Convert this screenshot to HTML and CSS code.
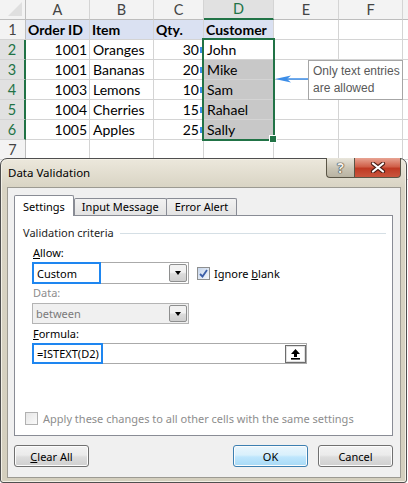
FILE: index.html
```html
<!DOCTYPE html>
<html>
<head>
<meta charset="utf-8">
<link rel="stylesheet" href="styles.css">
</head>
<body>
<div class="sheet">
  <div class="grid">
    <div class="corner"><span class="tri"></span></div>
    <div class="ch">A</div><div class="ch">B</div><div class="ch">C</div><div class="ch ch-sel">D</div><div class="ch">E</div><div class="ch">F</div><div class="ch"></div>

    <div class="rh">1</div>
    <div class="c hd">Order ID</div><div class="c hd">Item</div><div class="c hd">Qty.</div><div class="c hd">Customer</div><div class="c"></div><div class="c"></div><div class="c"></div>

    <div class="rh rh-sel">2</div>
    <div class="c num">1001</div><div class="c">Oranges</div><div class="c num numc">30</div><div class="c">John</div><div class="c"></div><div class="c"></div><div class="c"></div>

    <div class="rh rh-sel">3</div>
    <div class="c num">1001</div><div class="c">Bananas</div><div class="c num numc">20</div><div class="c gray">Mike</div><div class="c"></div><div class="c"></div><div class="c"></div>

    <div class="rh rh-sel">4</div>
    <div class="c num">1003</div><div class="c">Lemons</div><div class="c num numc">10</div><div class="c gray">Sam</div><div class="c"></div><div class="c"></div><div class="c"></div>

    <div class="rh rh-sel">5</div>
    <div class="c num">1004</div><div class="c">Cherries</div><div class="c num numc">15</div><div class="c gray">Rahael</div><div class="c"></div><div class="c"></div><div class="c"></div>

    <div class="rh rh-sel">6</div>
    <div class="c num">1005</div><div class="c">Apples</div><div class="c num numc">25</div><div class="c gray">Sally</div><div class="c"></div><div class="c"></div><div class="c"></div>

    <div class="rh">7</div>
    <div class="c"></div><div class="c"></div><div class="c"></div><div class="c"></div><div class="c"></div><div class="c"></div><div class="c"></div>

    <div class="rh"></div>
    <div class="c"></div><div class="c"></div><div class="c"></div><div class="c"></div><div class="c"></div><div class="c"></div><div class="c"></div>
  </div>

  <div class="marks"></div>
  <div class="selection"><span class="handle"></span></div>

  <svg class="arrow" width="34" height="10" viewBox="0 0 34 10">
    <line x1="8" y1="5" x2="34" y2="5" stroke="#3d8ee8" stroke-width="1.5"/>
    <path d="M0 5 L16 1.5 L12 5 L16 8.5 Z" fill="#3d8ee8"/>
  </svg>
  <div class="note">Only text entries<br>are allowed</div>

  <div class="dialog">
    <div class="titlebar">
      <span class="title">Data Validation</span>
      <div class="caption">
        <span class="cbtn help">?</span>
        <span class="cbtn close">
          <svg width="16" height="11" viewBox="0 0 16 11">
            <path d="M3 1.5 L13 9.5 M13 1.5 L3 9.5" stroke="#4a1c14" stroke-width="4.2" stroke-linecap="round"/>
            <path d="M3 1.5 L13 9.5 M13 1.5 L3 9.5" stroke="#ffffff" stroke-width="2.2" stroke-linecap="round"/>
          </svg>
        </span>
      </div>
    </div>
    <div class="client">
      <div class="tabs">
        <div class="tab active">Settings</div>
        <div class="tab second">Input Message</div>
        <div class="tab">Error Alert</div>
      </div>
      <div class="panel">
        <div class="group">
          <span>Validation criteria</span><span class="gline"></span>
        </div>
        <div class="fields">
          <div class="lbl lbl-allow"><u>A</u>llow:</div>
          <div class="row">
            <div class="combo">
              <span class="val hl">Custom</span>
              <span class="dd"><span class="tri-d"></span></span>
            </div>
            <label class="chk">
              <span class="box checked">
                <svg width="9" height="9" viewBox="0 0 9 9"><path d="M1 5 L3.5 7.5 L8 1" fill="none" stroke="#3b5ea8" stroke-width="1.8"/></svg>
              </span>
              <span>Ignore <u>b</u>lank</span>
            </label>
          </div>
          <div class="lbl lbl-data">Data:</div>
          <div class="combo disabled">
            <span class="val">between</span>
            <span class="dd"><span class="tri-d"></span></span>
          </div>
          <div class="lbl lbl-formula"><u>F</u>ormula:</div>
          <div class="formula">
            <span class="val hl">=ISTEXT(D2)</span>
            <span class="ref">
              <svg width="11" height="12" viewBox="0 0 11 12"><path d="M5.5 1 L1 6 L4 6 L4 9 L7 9 L7 6 L10 6 Z" fill="#000"/><rect x="1" y="10" width="9" height="1.6" fill="#000"/></svg>
            </span>
          </div>
        </div>
        <label class="apply">
          <span class="box"></span>
          <span>Apply these changes to all other cells with the same settings</span>
        </label>
      </div>
      <div class="buttons">
        <span class="btn"><u>C</u>lear All</span>
        <span class="spacer"></span>
        <span class="btn default">OK</span>
        <span class="btn">Cancel</span>
      </div>
    </div>
  </div>
</div>
</body>
</html>
```

FILE: styles.css
```css
* { box-sizing: border-box; }
html, body { margin: 0; padding: 0; background: #fff; }
body { width: 408px; height: 483px; overflow: hidden; }

.sheet { position: relative; width: 408px; height: 483px; font-family: Lato, "Liberation Sans", sans-serif; }

.grid {
  display: grid;
  grid-template-columns: 26px 64px 64px 50px 70px 65px 64px 20px;
  grid-template-rows: 20px repeat(8, 20px);
  width: 423px;
}
.grid > div { border-right: 1px solid #d4d4d4; border-bottom: 1px solid #d4d4d4; overflow: hidden; white-space: nowrap; }

.corner { background: #f3f3f3; position: relative; border-color: #bdbdbd !important; }
.tri { position: absolute; right: 3px; bottom: 3px; width: 0; height: 0; border-left: 14px solid transparent; border-bottom: 14px solid #dfdfdf; }

.ch { background: #f3f3f3; color: #444; font-size: 14.5px; line-height: 19px; text-align: center; border-bottom-color: #bdbdbd !important; }
.ch-sel { background: #e1e1e1; color: #217346; border-bottom: 2px solid #217346 !important; line-height: 18px; }

.rh { background: #f3f3f3; color: #444; font-size: 14.5px; line-height: 19px; text-align: center; border-right-color: #bdbdbd !important; }
.rh-sel { background: #e1e1e1; color: #217346; border-right: 2px solid #217346 !important; }

.c { font-size: 14px; line-height: 19px; color: #000; padding: 0 3px; }
.c.num { text-align: right; padding-right: 2px; }
.c.numc { padding-right: 4px; }
.c.hd { background: #dae1f2; font-weight: bold; padding-left: 2px; }
.c.gray { background: #c8c8c8; }

.marks {
  position: absolute; left: 200px; top: 40px; width: 2px; height: 100px;
  background: repeating-linear-gradient(transparent 0, transparent 7px, #3d8ee8 7px, #3d8ee8 13px, transparent 13px, transparent 20px);
}
.selection { position: absolute; left: 202px; top: 38px; width: 73px; height: 103px; border: 2px solid #217346; }
.handle { position: absolute; right: -4px; bottom: -4px; width: 6px; height: 6px; background: #217346; border: 1px solid #fff; box-sizing: content-box; }

.arrow { position: absolute; left: 275px; top: 74px; }
.note {
  position: absolute; left: 308px; top: 60px; width: 95px; height: 40px;
  border: 1px solid #a6a6a6; background: #fff;
  font-family: "Liberation Sans", Arial, sans-serif; font-size: 12px; line-height: 17px; color: #595959;
  padding: 2px 0 0 4px;
}

/* dialog */
.dialog {
  position: absolute; left: 0; top: 158px; width: 407px; height: 325px;
  border: 1px solid #4f4f4f; border-radius: 7px 7px 3px 3px;
  background: linear-gradient(#ece8dc 0px, #d9d4c4 28px, #d4cfbe 100%);
  box-shadow: inset 0 0 0 1px #f3f0e6;
  display: flex; flex-direction: column;
  font-family: "Noto Sans", "Open Sans", sans-serif; font-size: 11px; color: #000;
}
.titlebar { height: 28px; position: relative; display: flex; align-items: center; }
.title { padding-left: 7px; font-size: 11.5px; margin-top: -1px; }
.caption { position: absolute; top: -1px; right: 5px; display: flex; }
.cbtn {
  height: 20px; display: flex; align-items: center; justify-content: center;
  border: 1px solid #5a5546; border-top: none;
}
.help {
  width: 28px; border-radius: 0 0 0 4px; border-right: none;
  background: linear-gradient(#e9e6dc, #c9c4b4 55%, #b9b3a2);
  color: #f2f0ea; font-weight: bold; font-size: 14px; line-height: 18px;
  text-shadow: 0 0 1px #333, 0 0 1px #333, 0 0 1px #333;
}
.close {
  width: 47px; border-radius: 0 0 4px 0;
  background: linear-gradient(#e8a493, #d0604a 45%, #bf3a24 55%, #c9553d);
}

.client {
  flex: 1; margin: 0 5px 4px 6px;
  border: 1px solid #9c9a92; background: #f0f0f0;
  padding: 7px 7px 10px 6px;
  display: flex; flex-direction: column;
}
.tabs { display: flex; align-items: flex-end; height: 20px; position: relative; z-index: 1; }
.tab {
  height: 17px; padding: 0 8px; line-height: 16px;
  border: 1px solid #898c95; border-bottom: none; margin-right: -1px;
  background: linear-gradient(#f2f2f2, #e3e3e3);
  border-radius: 2px 2px 0 0;
}
.tab.active { height: 21px; margin-bottom: -1px; background: #fff; padding: 0 8px; line-height: 22px; }
.tab.second { margin-left: 1px; padding: 0 7px; }

.panel {
  height: 221px; background: #fff; border: 1px solid #898c95;
  display: flex; flex-direction: column; padding: 0 6px 0 8px;
}
.group { display: flex; align-items: center; height: 16px; margin-top: 9px; line-height: 16px; color: #1e1e1e; }
.gline { flex: 1; height: 1px; background: #d5dfe5; margin-left: 6px; }

.fields { display: flex; flex-direction: column; padding-left: 9px; }
.lbl { height: 16px; line-height: 16px; padding-left: 1px; }
.lbl-allow { margin-top: 4px; }
.lbl-data { margin-top: 1px; color: #8d8d8d; }
.lbl-formula { margin-top: 2px; }

.row { display: flex; align-items: center; margin-top: 1px; }
.combo {
  width: 157px; height: 22px; border: 1px solid #aaaaaa; background: #fff;
  display: flex; align-items: stretch; justify-content: space-between; position: relative;
}
.combo.disabled { background: #f0f0f0; height: 21px; margin-top: 2px; color: #7a7a7a; border-color: #b4b4b4; }
.val { display: flex; align-items: center; padding-left: 3px; }
.hl { border: 2px solid #1e86f0; margin: -1px; width: 69px; padding-left: 3px; }
.formula .hl { width: 71px; }
.dd {
  width: 18px; margin: 1px; border: 1px solid #8e8f8f; border-radius: 2px;
  background: linear-gradient(#f2f2f2 45%, #dcdcdc 55%, #cfcfcf);
  display: flex; align-items: center; justify-content: center;
}
.tri-d { width: 0; height: 0; border-left: 3.5px solid transparent; border-right: 3.5px solid transparent; border-top: 4px solid #000; }

.chk { display: flex; align-items: center; margin-left: 8px; }
.box {
  width: 13px; height: 13px; border: 1px solid #8e8f8f;
  background: linear-gradient(135deg, #dcdcdc, #fbfbfb);
  display: flex; align-items: center; justify-content: center; margin-right: 4px;
}
.box.checked { background: linear-gradient(135deg, #c6d6ec, #f4f7fb); }

.formula {
  width: 275px; height: 21px; border: 1px solid #aaaaaa; background: #fff; margin-top: 1px;
  display: flex; justify-content: space-between; align-items: stretch;
}
.ref {
  width: 21px; margin: 1px 0 0; border: 1px solid #6d6d6d;
  box-shadow: inset 0 0 0 1px #e0e0e0;
  background: #fff; display: flex; align-items: center; justify-content: center;
}

.apply { display: flex; align-items: center; height: 16px; margin-top: 46px; padding-left: 2px; color: #8d8d8d; }
.apply .box { background: linear-gradient(135deg, #e6e6e6, #fafafa); border-color: #b1b1b1; margin-right: 5px; }

.buttons { display: flex; margin-top: auto; gap: 10px; }
.spacer { flex: 1; }
.btn {
  width: 75px; height: 22px; display: flex; align-items: center; justify-content: center;
  border: 1px solid #707070; border-radius: 3px;
  background: linear-gradient(#f2f2f2 0%, #ebebeb 45%, #dddddd 55%, #cfcfcf 100%);
  box-shadow: inset 0 0 0 1px #fcfcfc;
}
.btn.default {
  border-color: #3c7fb1;
  background: linear-gradient(#eaf6fd 0%, #d9f0fc 45%, #bee6fd 55%, #a7d9f5 100%);
}
```
